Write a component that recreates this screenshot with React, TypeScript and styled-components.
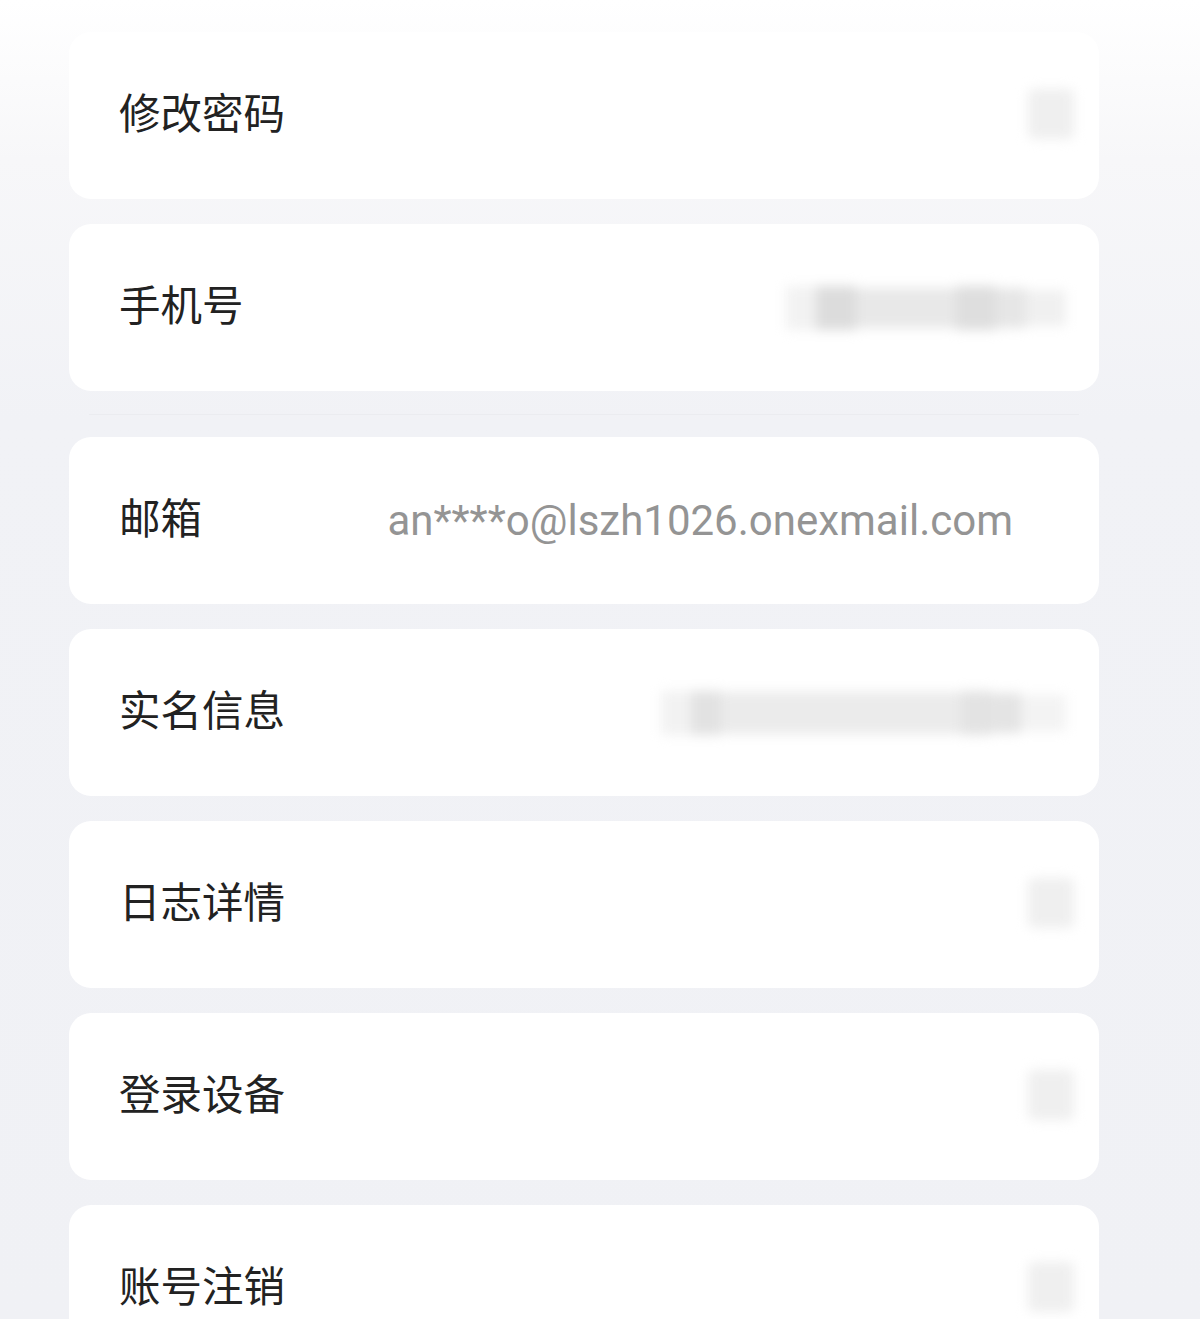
import React from "react";
import styled, { createGlobalStyle } from "styled-components";

const GlobalStyle = createGlobalStyle`
  html, body { margin: 0; padding: 0; }
  body {
    background: linear-gradient(180deg, #ffffff 0px, #f7f7f9 160px, #f1f2f6 420px, #f0f1f5 100%);
    min-height: 1319px;
    font-family: "Noto Sans CJK SC", "Noto Sans", sans-serif;
  }
`;

const Page = styled.div`
  height: 1319px;
  overflow: hidden;
  padding: 32px 0 0 69px;
  box-sizing: border-box;
`;

const List = styled.div`
  width: 1030px;
  display: flex;
  flex-direction: column;
  gap: 25px;
`;

const Card = styled.div`
  height: 167px;
  flex-shrink: 0;
  background: #ffffff;
  border-radius: 22px;
  display: flex;
  align-items: center;
  justify-content: space-between;
  padding: 0 25px 0 50px;
  box-sizing: border-box;
`;

const Label = styled.span`
  font-family: "Noto Sans CJK SC", "Noto Sans", sans-serif;
  font-size: 41.5px;
  color: #222222;
  line-height: 1;
  margin-bottom: 8px;
`;

const Right = styled.div`
  display: flex;
  align-items: center;
`;

const Email = styled.span<{ $pr: number }>`
  font-family: Roboto, "Liberation Sans", sans-serif;
  font-size: 42px;
  color: #949494;
  padding-right: ${(p) => p.$pr}px;
  line-height: 1;
`;

const Blur = styled.div<{ $w: number; $h: number; $c: string; $r?: number }>`
  width: ${(p) => p.$w}px;
  height: ${(p) => p.$h}px;
  background: ${(p) => p.$c};
  border-radius: 6px;
  filter: blur(${(p) => p.$r ?? 7}px);
  margin-bottom: 4px;
`;

const BlurRow = styled.div`
  display: flex;
  align-items: center;
  filter: blur(6px);
  margin-right: 8px;
`;

const Bar = styled.div<{ $w: number; $h: number; $c: string }>`
  width: ${(p) => p.$w}px;
  height: ${(p) => p.$h}px;
  background: ${(p) => p.$c};
`;

const SectionGap = styled.div`
  height: 46px;
  margin: -25px 0;
  flex-shrink: 0;
  display: flex;
  align-items: center;
  padding: 0 20px;
  box-sizing: border-box;
  &::after {
    content: "";
    flex: 1;
    height: 1px;
    background: #ebecf0;
  }
`;

const Chevron = () => <Blur $w={46} $h={50} $c="#efefef" $r={6} />;

export default function App() {
  return (
    <>
      <GlobalStyle />
      <Page>
        <List>
          <Card>
            <Label>修改密码</Label>
            <Right>
              <Chevron />
            </Right>
          </Card>
          <Card>
            <Label>手机号</Label>
            <Right>
              <BlurRow>
                <Bar $w={30} $h={44} $c="#f2f2f2" />
                <Bar $w={40} $h={44} $c="#dcdcdc" />
                <Bar $w={100} $h={40} $c="#e8e8e8" />
                <Bar $w={40} $h={44} $c="#dedede" />
                <Bar $w={30} $h={40} $c="#e6e6e6" />
                <Bar $w={40} $h={36} $c="#f0f0f0" />
              </BlurRow>
            </Right>
          </Card>
          <SectionGap />
          <Card>
            <Label>邮箱</Label>
            <Right>
              <Email $pr={61}>an****o@lszh1026.onexmail.com</Email>
            </Right>
          </Card>
          <Card>
            <Label>实名信息</Label>
            <Right>
              <BlurRow>
                <Bar $w={30} $h={44} $c="#f2f2f2" />
                <Bar $w={30} $h={44} $c="#e2e2e2" />
                <Bar $w={240} $h={42} $c="#ebebeb" />
                <Bar $w={30} $h={44} $c="#e3e3e3" />
                <Bar $w={30} $h={40} $c="#e4e4e4" />
                <Bar $w={45} $h={36} $c="#f3f3f3" />
              </BlurRow>
            </Right>
          </Card>
          <Card>
            <Label>日志详情</Label>
            <Right>
              <Chevron />
            </Right>
          </Card>
          <Card>
            <Label>登录设备</Label>
            <Right>
              <Chevron />
            </Right>
          </Card>
          <Card>
            <Label>账号注销</Label>
            <Right>
              <Chevron />
            </Right>
          </Card>
        </List>
      </Page>
    </>
  );
}
